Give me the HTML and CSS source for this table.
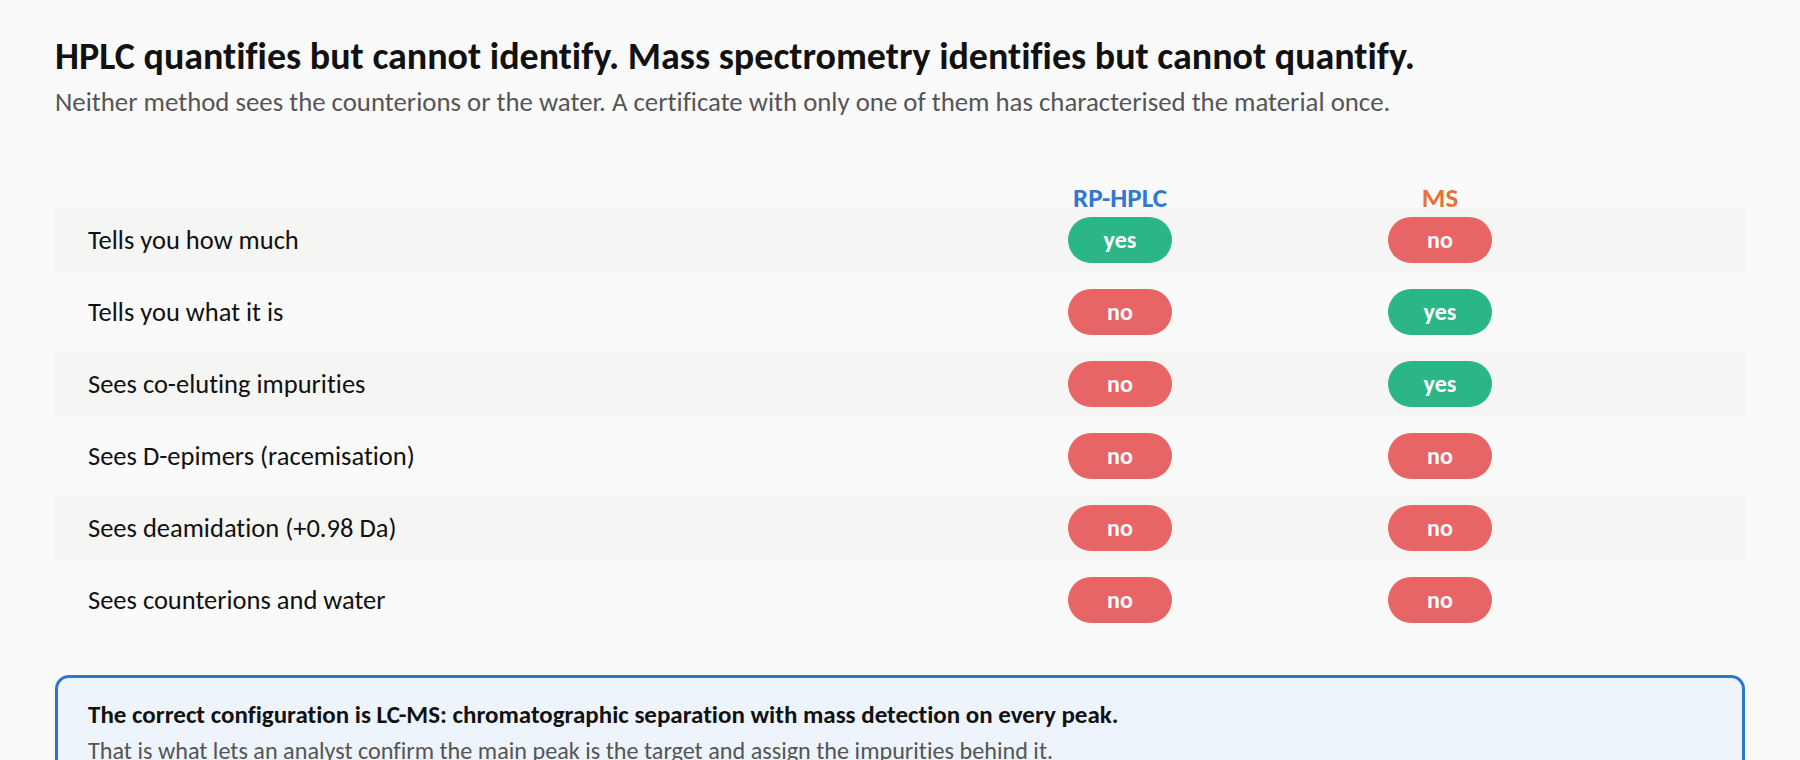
FILE: index.html
```html
<!DOCTYPE html>
<html lang="en">
<head>
<meta charset="utf-8">
<title>HPLC vs MS</title>
<link rel="stylesheet" href="styles.css">
</head>
<body>
<main class="page">
  <h1 class="title">HPLC quantifies but cannot identify. Mass spectrometry identifies but cannot quantify.</h1>
  <p class="subtitle">Neither method sees the counterions or the water. A certificate with only one of them has characterised the material once.</p>

  <div class="matrix">
    <div class="matrix-head">
      <span></span>
      <span class="col-head col-hplc">RP-HPLC</span>
      <span class="col-head col-ms">MS</span>
    </div>
    <div class="row row-band">
      <span class="label">Tells you how much</span>
      <span class="cell"><span class="pill yes">yes</span></span>
      <span class="cell"><span class="pill no">no</span></span>
    </div>
    <div class="row">
      <span class="label">Tells you what it is</span>
      <span class="cell"><span class="pill no">no</span></span>
      <span class="cell"><span class="pill yes">yes</span></span>
    </div>
    <div class="row row-band">
      <span class="label">Sees co-eluting impurities</span>
      <span class="cell"><span class="pill no">no</span></span>
      <span class="cell"><span class="pill yes">yes</span></span>
    </div>
    <div class="row">
      <span class="label">Sees D-epimers (racemisation)</span>
      <span class="cell"><span class="pill no">no</span></span>
      <span class="cell"><span class="pill no">no</span></span>
    </div>
    <div class="row row-band">
      <span class="label">Sees deamidation (+0.98 Da)</span>
      <span class="cell"><span class="pill no">no</span></span>
      <span class="cell"><span class="pill no">no</span></span>
    </div>
    <div class="row">
      <span class="label">Sees counterions and water</span>
      <span class="cell"><span class="pill no">no</span></span>
      <span class="cell"><span class="pill no">no</span></span>
    </div>
  </div>

  <div class="callout">
    <p class="callout-lead">The correct configuration is LC-MS: chromatographic separation with mass detection on every peak.</p>
    <p class="callout-body">That is what lets an analyst confirm the main peak is the target and assign the impurities behind it.</p>
  </div>
</main>
</body>
</html>
```

FILE: styles.css
```css
* {
  box-sizing: border-box;
}

html, body {
  margin: 0;
  padding: 0;
  background: #fafafa;
}

body {
  font-family: Carlito, Calibri, Lato, "Liberation Sans", sans-serif;
  font-variant-ligatures: none;
  color: #111;
}

.page {
  padding: 34px 55px 0 55px;
}

.title {
  margin: 0;
  font-size: 38px;
  line-height: 1.2;
  font-weight: 700;
  color: #111;
}

.subtitle {
  margin: 6px 0 0 0;
  font-size: 26.8px;
  line-height: 1.2;
  color: #555;
}

.matrix {
  margin-top: 70px;
  display: flex;
  flex-direction: column;
  gap: 8px;
}

.matrix-head,
.row {
  display: grid;
  grid-template-columns: 1fr 320px 320px 145px;
  align-items: center;
}

.matrix-head {
  height: 20px;
  margin-bottom: -8px;
}

.col-head {
  text-align: center;
  font-size: 27px;
  line-height: 20px;
  font-weight: 700;
}

.col-hplc {
  color: #2f78d3;
}

.col-ms {
  color: #e8713a;
}

.row {
  height: 64px;
}

.row-band {
  background: #f5f5f3;
}

.label {
  padding-left: 33px;
  font-size: 26.5px;
  color: #111;
}

.cell {
  display: flex;
  justify-content: center;
}

.pill {
  width: 104px;
  height: 46px;
  border-radius: 23px;
  display: flex;
  align-items: center;
  justify-content: center;
  color: #fff;
  font-size: 24px;
  font-weight: 700;
}

.pill.yes {
  background: #2bb686;
}

.pill.no {
  background: #e76565;
}

.callout {
  margin-top: 43px;
  border: 3px solid #2f76d3;
  border-radius: 14px;
  background: #eef4fc;
  padding: 22px 30px 24px 30px;
}

.callout-lead {
  margin: 0;
  font-size: 25px;
  line-height: 1.2;
  font-weight: 700;
  color: #111;
}

.callout-body {
  margin: 5px 0 0 0;
  font-size: 24.2px;
  line-height: 1.3;
  color: #555;
}
```
